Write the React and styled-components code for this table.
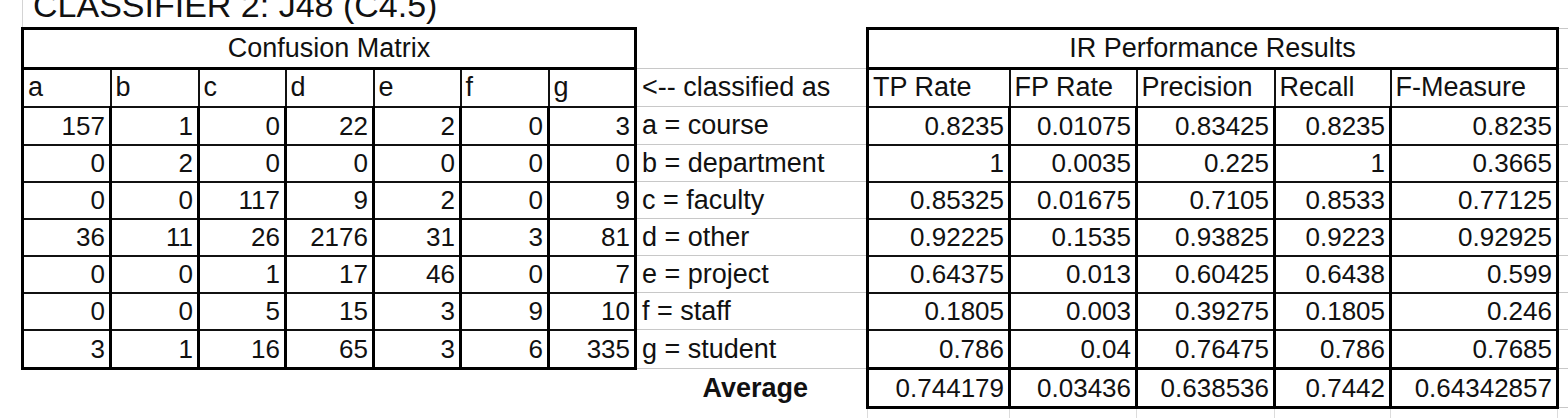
import styled, { createGlobalStyle } from "styled-components";

const GlobalStyle = createGlobalStyle`
  html, body {
    margin: 0;
    padding: 0;
    background: #fff;
  }
  body {
    font-family: "Liberation Sans", Arial, sans-serif;
    color: #111;
    overflow: hidden;
  }
`;

const classes = ["a", "b", "c", "d", "e", "f", "g"];
const measures = ["TP Rate", "FP Rate", "Precision", "Recall", "F-Measure"];
const matrixWidths = [88, 88, 87, 88, 87, 88, 87];
const irWidths = [142, 127, 138, 116, 167];

const rows = [
  { counts: [157, 1, 0, 22, 2, 0, 3], label: "a = course", ir: ["0.8235", "0.01075", "0.83425", "0.8235", "0.8235"], h: 38 },
  { counts: [0, 2, 0, 0, 0, 0, 0], label: "b = department", ir: ["1", "0.0035", "0.225", "1", "0.3665"], h: 37 },
  { counts: [0, 0, 117, 9, 2, 0, 9], label: "c = faculty", ir: ["0.85325", "0.01675", "0.7105", "0.8533", "0.77125"], h: 37 },
  { counts: [36, 11, 26, 2176, 31, 3, 81], label: "d = other", ir: ["0.92225", "0.1535", "0.93825", "0.9223", "0.92925"], h: 37 },
  { counts: [0, 0, 1, 17, 46, 0, 7], label: "e = project", ir: ["0.64375", "0.013", "0.60425", "0.6438", "0.599"], h: 37 },
  { counts: [0, 0, 5, 15, 3, 9, 10], label: "f = staff", ir: ["0.1805", "0.003", "0.39275", "0.1805", "0.246"], h: 37 },
  { counts: [3, 1, 16, 65, 3, 6, 335], label: "g = student", ir: ["0.786", "0.04", "0.76475", "0.786", "0.7685"], h: 39 },
];

const average = ["0.744179", "0.03436", "0.638536", "0.7442", "0.64342857"];

export default function App() {
  return (
    <>
      <GlobalStyle />
      <Title>CLASSIFIER 2: J48 (C4.5)</Title>
      <Sheet>
        <colgroup>
          {matrixWidths.map((w, i) => (
            <col key={"m" + i} width={w} />
          ))}
          <col width={232} />
          {irWidths.map((w, i) => (
            <col key={"r" + i} width={w} />
          ))}
          <col width={11} />
        </colgroup>
        <tbody>
          <Row $h={40}>
            <BlockTitle colSpan={7}>Confusion Matrix</BlockTitle>
            <Blank />
            <BlockTitle colSpan={5}>IR Performance Results</BlockTitle>
            <Filler $top />
          </Row>
          <Row $h={38}>
            {classes.map((c, i) => (
              <HeadCell key={c} $first={i === 0} $last={i === 6}>
                {c}
              </HeadCell>
            ))}
            <LabelCell $top>&lt;-- classified as</LabelCell>
            {measures.map((m, i) => (
              <HeadCell key={m} $first={i === 0} $last={i === 4}>
                {m}
              </HeadCell>
            ))}
            <Filler />
          </Row>
          {rows.map((r, ri) => (
            <Row key={r.label} $h={r.h}>
              {r.counts.map((n, i) => (
                <NumCell key={i} $bottom={ri === rows.length - 1}>
                  {n}
                </NumCell>
              ))}
              <LabelCell>{r.label}</LabelCell>
              {r.ir.map((v, i) => (
                <NumCell key={i} $bottom={ri === rows.length - 1}>
                  {v}
                </NumCell>
              ))}
              <Filler />
            </Row>
          ))}
          <Row $h={39}>
            <Blank colSpan={7} />
            <AverageLabel>Average</AverageLabel>
            {average.map((v, i) => (
              <NumCell key={i} $bottom>
                {v}
              </NumCell>
            ))}
            <Filler />
          </Row>
          <Row $h={12}>
            <Blank colSpan={8} />
            {measures.map((m) => (
              <GridStub key={m} />
            ))}
            <GridStub />
          </Row>
        </tbody>
      </Sheet>
    </>
  );
}

const Title = styled.div`
  height: 27px;
  margin-left: 22px;
  padding-left: 10px;
  border-left: 1px solid #d4d4d4;
  font-size: 34px;
  line-height: 10px;
  white-space: nowrap;
  box-sizing: border-box;
`;

const Sheet = styled.table`
  margin-left: 21px;
  border-collapse: collapse;
  table-layout: fixed;
  width: 1546px;
  font-size: 27px;
`;

const Row = styled.tr`
  height: ${(p) => p.$h}px;
`;

const Cell = styled.td`
  padding: 0 5px;
  white-space: nowrap;
  overflow: hidden;
  line-height: 1;
  vertical-align: middle;
`;

const BlockTitle = styled(Cell)`
  border: 3px solid #000;
  text-align: center;
`;

const Blank = styled(Cell)`
  border: none;
`;

const HeadCell = styled(Cell)`
  text-align: left;
  padding-left: 4px;
  border-top: 3px solid #000;
  border-bottom: 2px solid #111;
  border-left: ${(p) => (p.$first ? "3px solid #000" : "2px solid #111")};
  border-right: ${(p) => (p.$last ? "3px solid #000" : "2px solid #111")};
`;

const NumCell = styled(Cell)`
  text-align: right;
  font-size: 26px;
  padding-right: 4px;
  border-left: 3px solid #000;
  border-right: 3px solid #000;
  border-bottom: ${(p) => (p.$bottom ? "3px solid #000" : "2px solid #111")};
`;

const LabelCell = styled(Cell)`
  text-align: left;
  padding-left: 5px;
  border-bottom: 1px solid #c8c8c8;
  border-top: ${(p) => (p.$top ? "1px solid #c8c8c8" : "none")};
`;

const AverageLabel = styled(Cell)`
  text-align: right;
  font-weight: bold;
  padding-right: 58px;
  border: none;
`;

const Filler = styled(Cell)`
  padding: 0;
  border-bottom: 1px solid #c8c8c8;
  border-top: ${(p) => (p.$top ? "1px solid #c8c8c8" : "none")};
`;

const GridStub = styled(Cell)`
  padding: 0;
  border-left: 1px solid #dcdcdc;
`;
